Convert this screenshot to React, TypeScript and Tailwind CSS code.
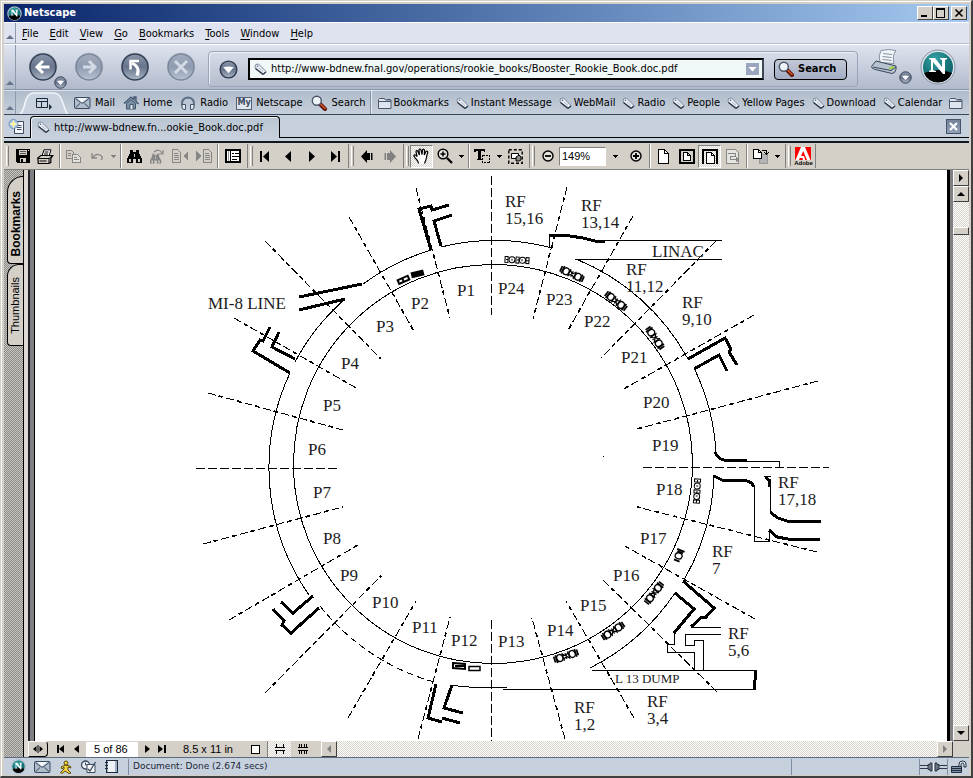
import type { ReactNode } from "react";

const UI = "font-['DejaVu_Sans_Condensed','DejaVu_Sans',sans-serif]";
const ARIAL = "font-['Liberation_Sans',Arial,sans-serif]";
const RAISED = "bg-[#d4d0c8] border border-t-white border-l-white border-r-[#404040] border-b-[#404040]";
const DITHER_DARK = "bg-[repeating-conic-gradient(#8c8c8a_0_25%,#c8c5be_0_50%)] bg-[length:2px_2px]";
const DITHER_LIGHT = "bg-[repeating-conic-gradient(#ffffff_0_25%,#d8d4cc_0_50%)] bg-[length:2px_2px]";

function Svg({ w, h, crisp, children }: { w: number; h: number; crisp?: boolean; children: ReactNode }) {
  return (
    <svg
      width={w}
      height={h}
      viewBox={`0 0 ${w} ${h}`}
      fill="none"
      stroke="#000"
      className="shrink-0"
      shapeRendering={crisp ? "crispEdges" : "auto"}
      aria-hidden="true"
    >
      {children}
    </svg>
  );
}

/* ---------- browser icons ---------- */

const TagIcon = () => (
  <Svg w={13} h={13}>
    <path d="M1 3.500 1.800 1.500 4.500 1 12 8.500 9.500 11 1.500 5.500z" fill="#e9eef4" stroke="#7a879b" />
    <path d="M1.500 5.500 9 11.500M9 11.500 12 9" stroke="#2b3648" strokeWidth="1.300" />
    <circle cx="3.500" cy="3.200" r=".8" fill="#53617a" stroke="none" />
    <path d="m5 5 4 3.500" stroke="#b0bac9" />
  </Svg>
);

const FolderIcon = () => (
  <Svg w={14} h={12}>
    <path d="M.5 11.500v-9l1-1h5l1 1.500h5.500v8.500z" fill="#dfe5ee" stroke="#4a566c" />
    <path d="M1 4.500h12M9 2.500h3.500" stroke="#4a566c" />
  </Svg>
);

const Magnifier = () => (
  <Svg w={17} h={16}>
    <path d="m9 9 5 5" stroke="#5c1408" strokeWidth="4" strokeLinecap="round" />
    <path d="m9.500 9 4.500 4.500" stroke="#d8562a" strokeWidth="1.600" strokeLinecap="round" />
    <circle cx="5.800" cy="5.800" r="4.500" fill="#eef3f8" stroke="#4b5666" strokeWidth="1.400" />
    <path d="M3.500 5a3 3 0 0 1 2-1.800" stroke="#fff" />
  </Svg>
);

const MailIcon = () => (
  <Svg w={17} h={12}>
    <rect x=".5" y=".5" width="15.500" height="11" rx="1" fill="#aebccb" stroke="#3c4a60" />
    <path d="m3 1 5.200 4.500L13.500 1z" fill="#f4f8fb" stroke="none" />
    <path d="m1.500 1.500 5 4q1.700 1.500 3.500 0l5-4M1.500 10.500l4.500-4M15 10.500l-4.500-4" stroke="#3c4a60" />
  </Svg>
);

const HomeIcon = () => (
  <Svg w={16} h={14}>
    <path d="M1 7.500 8 1l3 2.500V1h2v4.500l2.500 2.500" fill="#8fa3b6" stroke="#41566c" strokeWidth="1.300" />
    <path d="M3.500 7.500v5.500h9V7.500L8 3.500z" fill="#7b90a5" stroke="#41566c" />
    <path d="M7 13V8.500h3V13" fill="#e8eef4" stroke="#41566c" />
  </Svg>
);

const HeadphoneIcon = () => (
  <Svg w={16} h={15}>
    <path d="M2.500 10C1 4.500 4 1.500 8 1.500s7 3 5.500 8.500" stroke="#5b6e86" strokeWidth="2" />
    <path d="M2 8.500h3.500v5H4L2 12zM14 8.500h-3.500v5H12l2-1.500z" fill="#e4ebf2" stroke="#3f526a" />
  </Svg>
);

const NLogo = ({ size }: { size: number }) => (
  <svg width={size} height={size} viewBox="0 0 36 36" className="shrink-0" aria-hidden="true">
    <defs>
      <radialGradient id={`n${size}`} cx=".4" cy=".25" r=".8">
        <stop offset="0" stopColor="#35a3a5" />
        <stop offset="1" stopColor="#04565d" />
      </radialGradient>
    </defs>
    <circle cx="18" cy="18" r="17" fill="#dce3ea" stroke="#8490a2" />
    <circle cx="18" cy="18" r="15" fill={`url(#n${size})`} />
    <path d="M4 24Q18 18 32 24A15 15 0 0 1 4 24z" fill="#000" />
    <path d="M9 9h6l7 9v-7l-2-1V9h7v1l-2 1v14h-2L13 13v8l3 1v1H9v-1l2-1V11L9 10z" fill="#fff" />
  </svg>
);

const Gradients = () => (
  <svg width="0" height="0" className="absolute" aria-hidden="true">
    <defs>
      <linearGradient id="ball" x1="0" y1="0" x2="0" y2="1">
        <stop offset="0" stopColor="#8b97aa" />
        <stop offset=".5" stopColor="#66738a" />
        <stop offset="1" stopColor="#aab7c7" />
      </linearGradient>
      <linearGradient id="pale" x1="0" y1="0" x2="0" y2="1">
        <stop offset="0" stopColor="#a3acbd" />
        <stop offset=".5" stopColor="#8f9bb0" />
        <stop offset="1" stopColor="#b7c2d1" />
      </linearGradient>
    </defs>
  </svg>
);

function RoundButton({ label, pale, children }: { label: string; pale?: boolean; children: ReactNode }) {
  return (
    <button aria-label={label} className="flex h-[30px] w-[30px] shrink-0 items-center justify-center">
      <Svg w={30} h={30}>
        <circle cx="15" cy="15" r="14.500" fill="#c3cad8" stroke="none" />
        <circle cx="15" cy="15" r="13" fill={pale ? "url(#pale)" : "url(#ball)"} stroke={pale ? "#7c889c" : "#354257"} strokeWidth="1.600" />
        {children}
      </Svg>
    </button>
  );
}

function DropBall({ label, size }: { label: string; size: number }) {
  return (
    <button aria-label={label} className="block shrink-0">
      <svg width={size} height={size} viewBox="0 0 20 20" className="block" aria-hidden="true">
        <circle cx="10" cy="10" r="8.800" fill="url(#ball)" stroke="#2d394d" strokeWidth="1.400" />
        <path d="M4.500 7.500Q10 6 15.500 7.500L10 14z" fill="#fff" />
      </svg>
    </button>
  );
}

/* ---------- rows of the browser ---------- */

function Grippy() {
  return (
    <span className="flex w-3 shrink-0 items-end justify-center self-stretch border-r border-[#8d99ad] pb-1">
      <Svg w={8} h={4}>
        <path d="M0 4h8L4 0z" fill="#66738a" stroke="none" />
      </Svg>
    </span>
  );
}

function TitleBar() {
  const btn = `${RAISED} flex h-[14px] w-4 items-center justify-center`;
  return (
    <header className="flex h-[18px] shrink-0 items-center bg-linear-to-r from-[#0a246a] to-[#a6caf0] pr-0.5 pl-[3px]">
      <NLogo size={15} />
      <h1 className="ml-[2px] flex-1 pt-px text-[11px] font-bold text-white">Netscape</h1>
      <button aria-label="Minimize" className={btn}>
        <Svg w={10} h={10} crisp><path d="M1 8h6" strokeWidth="2" /></Svg>
      </button>
      <button aria-label="Maximize" className={btn}>
        <Svg w={10} h={10} crisp><path d="M.5 2v7.500h8V2" /><path d="M0 1h9" strokeWidth="2" /></Svg>
      </button>
      <button aria-label="Close" className={`${btn} ml-0.5`}>
        <Svg w={10} h={10}><path d="m1.500 1.500 7 7m0-7-7 7" strokeWidth="1.600" /></Svg>
      </button>
    </header>
  );
}

const MENUS = ["File", "Edit", "View", "Go", "Bookmarks", "Tools", "Window", "Help"];

function MenuBar() {
  return (
    <nav className="flex h-[22px] shrink-0 items-center border-t border-b border-t-white border-b-[#b3bccb] bg-[#dfe3ef]">
      <Grippy />
      <div className="flex gap-[11px] pt-0.5 pl-1.5">
        {MENUS.map((m) => (
          <button key={m}>
            <u className="underline-offset-2">{m[0]}</u>
            {m.slice(1)}
          </button>
        ))}
      </div>
    </nav>
  );
}

function NavBar() {
  return (
    <div className="flex h-[46px] shrink-0 items-center border-t border-b border-t-white border-b-[#8793a8] bg-linear-to-b from-[#dfe3ef] to-[#b1bacb]">
      <Grippy />
      <div className="flex items-center gap-4 pl-3">
        <span className="relative">
          <RoundButton label="Back">
            <path d="M21.500 15H9.500M15 9l-6 6 6 6" stroke="#fff" strokeWidth="3" />
          </RoundButton>
          <span className="absolute top-[24px] left-[26px]"><DropBall label="History" size={13} /></span>
        </span>
        <RoundButton label="Forward" pale>
          <path d="M9 15h11.500M15 9l6 6-6 6" stroke="#d3dae4" strokeWidth="3" />
        </RoundButton>
        <RoundButton label="Reload">
          <path d="M17 23.500Q20.500 15 12 11" stroke="#fff" strokeWidth="3" />
          <path d="M19 9H10.500V17.500" stroke="#fff" strokeWidth="2.500" />
        </RoundButton>
        <RoundButton label="Stop" pale>
          <path d="m9 9 12 12m0-12-12 12" stroke="#d3dae4" strokeWidth="3" />
        </RoundButton>
      </div>
      <div className="mb-0.5 ml-3 flex h-[36px] flex-1 items-center self-end rounded border border-[#98a4b9] px-2.5 shadow-[inset_1px_1px_0_#eef1f8]">
        <DropBall label="Sites" size={19} />
        <div className="ml-2.5 flex h-[22px] flex-1 items-center border-2 border-black border-r-[#3c4658] bg-[#f1f8f8] pr-[3px] pl-1">
          <TagIcon />
          <input
            aria-label="Address"
            className="ml-1 h-4 min-w-0 flex-1 bg-transparent outline-none"
            defaultValue="http://www-bdnew.fnal.gov/operations/rookie_books/Booster_Rookie_Book.doc.pdf"
          />
          <button aria-label="Show addresses" className="bg-[#9aa6bd]">
            <Svg w={13} h={12}><path d="M2.500 4h8l-4 4.500z" fill="#fff" stroke="none" /></Svg>
          </button>
        </div>
        <button className="ml-2.5 flex h-[21px] w-[73px] items-center gap-[3px] rounded border border-black bg-linear-to-b from-[#c2c9d8] to-[#a3adc3] pl-[3px] font-bold">
          <Magnifier />
          Search
        </button>
      </div>
      <div className="flex w-[111px] items-center pl-3">
        <span className="relative h-[38px] w-[50px]">
          <button aria-label="Print">
            <Svg w={32} h={28}>
              <path d="M11 2.500q8-2 15 0-4 5-2 13l-14-1q-2-7 1-12z" fill="#f2f5f8" stroke="#8591a2" />
              <path d="m13 5.500 9 1m-9.500 2 9 1m-9 2 9 1" stroke="#8591a2" />
              <path d="M6 13 1.500 18.500q0 2 3 2.800L22 25.500q3 0 4-4V18L10 14z" fill="#b9c3d0" stroke="#39475c" />
              <path d="M3 19 21 22.500l5-3.500" stroke="#39475c" />
              <path d="m19 20.500 5-1.500" stroke="#9ad23c" strokeWidth="2" />
            </Svg>
          </button>
          <span className="absolute top-[23px] left-[29px]"><DropBall label="Print options" size={13} /></span>
        </span>
        <NLogo size={36} />
      </div>
    </div>
  );
}

const LEFT_LINKS: [string, ReactNode][] = [
  ["Mail", <MailIcon key="i" />],
  ["Home", <HomeIcon key="i" />],
  ["Radio", <HeadphoneIcon key="i" />],
  ["Netscape", <span key="i" className="flex h-[13px] w-4 items-center justify-center border border-[#54637a] bg-[#dfe6ee] text-[9px] font-bold text-[#3c4a60]">My</span>],
  ["Search", <Magnifier key="i" />],
];
const RIGHT_LINKS = ["Instant Message", "WebMail", "Radio", "People", "Yellow Pages", "Download", "Calendar"];

function LinksBar() {
  return (
    <nav className="flex h-[25px] shrink-0 items-center overflow-hidden border-t border-b border-t-[#dbe2ec] border-b-[#39465a] bg-linear-to-b from-[#b1bccb] to-[#c6d0dc] whitespace-nowrap">
      <Grippy />
      <button aria-label="Sidebar" className="shrink-0">
        <Svg w={54} h={24}>
          <path d="M3 24Q7 22 9 12T18 2h20q6 0 9 10t5 12" fill="#c9d3df" stroke="#f3f6fa" strokeWidth="1.500" />
          <path d="M20.500 7.500h11v9h-11zM20.500 10.500h11M25.500 10.500v6" stroke="#1b2739" />
          <path d="M33 13v6l3-3z" fill="#1b2739" stroke="none" />
        </Svg>
      </button>
      <div className="flex items-center gap-2 pt-px pl-1">
        {LEFT_LINKS.map(([t, i]) => (
          <a key={t} href="#" className="flex items-center gap-1">{i}{t}</a>
        ))}
      </div>
      <span className="mx-1 w-0.5 self-stretch border-l border-[#8793a8] bg-[#e4e9f0]" />
      <div className="flex items-center gap-[7px] pt-px pl-0.5">
        <a href="#" className="flex items-center gap-0.5"><FolderIcon />Bookmarks</a>
        {RIGHT_LINKS.map((t) => (
          <a key={t} href="#" className="flex items-center gap-0.5"><TagIcon />{t}</a>
        ))}
        <a href="#" aria-label="More bookmarks"><FolderIcon /></a>
      </div>
    </nav>
  );
}

function TabBar() {
  return (
    <div className="shrink-0 border-b-2 border-[#101820] bg-[#c6d1dd]">
      <div className="flex h-[23px] items-end">
        <button aria-label="New tab" className="flex w-[26px] items-center justify-center self-stretch border-b border-black">
          <Svg w={18} h={17}>
            <path d="M6.500 3.500h9v12h-9z" fill="#f5f7fa" stroke="#3c4a60" />
            <path d="M9 7.500h4.500M9 9.500h4.500m-4.500 2h4.500" stroke="#3c4a60" />
            <circle cx="5.500" cy="6" r="4.500" fill="#a9c7ea" stroke="#6e8fb8" />
            <path d="m5.500 1.500 1.200 3.300L10 6 6.700 7.200 5.500 10.500 4.300 7.200 1 6l3.300-1.200z" fill="#fff6a0" stroke="none" />
          </Svg>
        </button>
        <button className="flex h-[22px] w-[250px] items-center rounded-t border border-b-0 border-black bg-linear-to-b from-[#b9c4d2] to-[#c8d2de] pl-1.5 shadow-[inset_1px_1px_0_#f0f4f8]">
          <TagIcon />
          <span className="pt-px pl-1">http://www-bdnew.fn...ookie_Book.doc.pdf</span>
        </button>
        <div className="flex flex-1 items-center justify-end self-stretch border-b border-black pr-2">
          <button aria-label="Close tab" className="border border-[#46536a] bg-linear-to-b from-[#74829a] to-[#93a1b5]">
            <Svg w={13} h={13}><path d="m3 3 7 7m0-7-7 7" stroke="#fff" strokeWidth="2" /></Svg>
          </button>
        </div>
      </div>
      <div className="h-[3px] bg-[#c6d1dd]" />
    </div>
  );
}

/* ---------- viewer toolbar ---------- */

function Tool({ label, on, children, className = "w-[23px]" }: { label: string; on?: boolean; children: ReactNode; className?: string }) {
  return (
    <button
      aria-label={label}
      className={`flex h-[23px] shrink-0 items-center justify-center ${className} ${on ? `border border-t-[#808080] border-l-[#808080] border-r-white border-b-white ${DITHER_LIGHT}` : ""}`}
    >
      {children}
    </button>
  );
}
const Sep = () => (
  <span className="flex w-[5px] shrink-0 justify-center self-stretch">
    <i className="w-0.5 border-l border-[#808080] bg-white" />
  </span>
);
const Split = () => (
  <span className="flex w-[9px] shrink-0 gap-[2px] self-stretch pl-0.5">
    <i className="w-px bg-[#808080]" />
    <i className="my-0.5 w-[3px] border-l border-r border-l-white border-r-[#808080]" />
  </span>
);
const Caret = ({ label, dim, className = "w-2.5" }: { label: string; dim?: boolean; className?: string }) => (
  <button aria-label={label} className={`flex shrink-0 justify-center ${className}`}>
    <Svg w={5} h={3} crisp><path d="M0 0h5L2.500 3z" fill={dim ? "#808080" : "#000"} stroke="none" /></Svg>
  </button>
);
const Nav = ({ d, color = "#000", w = 12 }: { d: string; color?: string; w?: number }) => (
  <Svg w={w} h={13}><path d={d} fill={color} stroke="none" /></Svg>
);
const FIRST = "M0 1h2v11H0zM9 1v11L3 6.500z";
const PREV = "M8 1v11L2 6.500z";
const NEXT = "M3 1v11l6-5.500z";
const LAST = "M2 1v11l6-5.500zM9 1h2v11H9z";

const Binoculars = ({ c = "#000" }: { c?: string }) => (
  <path
    d="M3 1h3v2h3V1h3v3l3 6v4H9v-4H6v4H0v-4l3-6zM2 10v3h2v-3zm9 0v3h2v-3zM7 5v3h1V5z"
    fill={c}
    stroke="none"
    fillRule="evenodd"
  />
);
const Sheet = () => (
  <>
    <path d="M1.500.5h6l4 4v10h-10z" fill="#fff" />
    <path d="M7.500.5v4h4" />
  </>
);

function ViewerToolbar() {
  return (
    <div className="flex h-[27px] shrink-0 items-center overflow-hidden border-b border-[#808080] bg-[#d4d0c8] py-px">
      <span className="flex w-[7px] shrink-0 justify-center self-stretch py-0.5"><i className="w-[3px] border-l border-r border-l-white border-r-[#808080]" /></span>
      <Tool label="Save a copy">
        <Svg w={14} h={14} crisp>
          <path d="M0 0h14v14H1l-1-1z" fill="#000" stroke="none" />
          <path d="M3 1h8v5H3zM4 9h6v4H4zM12 1h1v1h-1z" fill="#d4d0c8" stroke="none" />
          <path d="M4 2.500h6M4 4.500h6" stroke="#555" /><path d="M5 10h2v3H5z" fill="#000" stroke="none" />
        </Svg>
      </Tool>
      <Tool label="Print">
        <Svg w={17} h={15}>
          <path d="M5 7 7 .8h7L12 7" fill="#fff" /><path d="M7.500 3h4M7 5h4" />
          <path d="m.8 9 3-2.500h12l-2 3v4l-2.500 1h-10z" fill="#d4d0c8" strokeWidth="1.200" />
          <path d="M1 9.500h11l3-2.500M12 9.500v5M2.500 12h7" />
        </Svg>
      </Tool>
      <Sep />
      <Tool label="Copy">
        <Svg w={15} h={13} crisp>
          <path d="M.5.500h5l2 2v6h-7z" stroke="#868686" /><path d="M6.500 4.500h5l3 3v5h-8z" fill="#e4e1da" stroke="#868686" />
          <path d="M2 3.500h3m-3 2h3m3 2h3m-3 2h5" stroke="#868686" />
        </Svg>
      </Tool>
      <Tool label="Undo"><Svg w={12} h={9}><path d="M1 1v5h5M1.500 5.500Q5 1 9 3t1 5" stroke="#868686" strokeWidth="1.300" /></Svg></Tool>
      <Caret label="Undo list" dim />
      <Sep />
      <Tool label="Find"><Svg w={15} h={14} crisp><Binoculars /></Svg></Tool>
      <Tool label="Find again">
        <Svg w={15} h={15}>
          <g transform="translate(0 4) scale(.75)"><Binoculars c="#868686" /></g>
          <path d="M4 3q5-4 8 1M13 1v4H9" stroke="#868686" strokeWidth="1.200" />
        </Svg>
      </Tool>
      <Tool label="Previous result">
        <Svg w={17} h={14} crisp><path d="M.5.500h5l3 3v10h-8zM2 4.500h4m-4 2h5m-5 2h5m-5 2h5" stroke="#868686" /><path d="M16 2v10l-5-5z" fill="#868686" stroke="none" /></Svg>
      </Tool>
      <Tool label="Next result">
        <Svg w={17} h={14} crisp><path d="M8.500.500h5l3 3v10h-8zM10 4.500h4m-4 2h5m-5 2h5m-5 2h5" stroke="#868686" /><path d="M1 2v10l5-5z" fill="#868686" stroke="none" /></Svg>
      </Tool>
      <Sep />
      <Tool label="Navigation pane" className="w-[25px]">
        <Svg w={16} h={14} crisp>
          <path d="M1 1h14v12H1z" fill="#fff" strokeWidth="2" /><path d="M5 1v12M7 4.500h2m1 0h4M7 7.500h7M7 10.500h5" /><path d="M3 2v10" stroke="#999" />
        </Svg>
      </Tool>
      <Split />
      <Tool label="First page"><Nav d={FIRST} /></Tool>
      <Tool label="Previous page"><Nav d={PREV} /></Tool>
      <Tool label="Next page"><Nav d={NEXT} /></Tool>
      <Tool label="Last page"><Nav d={LAST} /></Tool>
      <Split />
      <Tool label="Previous view"><Nav d="M0 6.500 6 0v3h3v7H6v3zM10 3h1.500v7H10z" /></Tool>
      <Tool label="Next view"><Nav d="M12 6.500 6 0v3H3v7h3v3zM.5 3H2v7H.5z" color="#808080" /></Tool>
      <Split />
      <Tool label="Hand" on>
        <Svg w={17} h={16}>
          <path d="M5.500 15.500q0-2-2-4t-2.700-4Q2 6 4.200 8.500L3 4q0-2 1.500-1.200L6.500 7 6 2q1-2 2 0l1 4.500L9.500 2q1.200-1.700 2 .2L11.300 7l1.700-3.500q1.500-1 1.800.8-1 3-1.300 5.200t-2 6" fill="#fff" strokeWidth="1.200" />
        </Svg>
      </Tool>
      <Tool label="Zoom in tool">
        <Svg w={16} h={16}><circle cx="6" cy="6" r="4.800" fill="#e6e4df" strokeWidth="1.500" /><path d="M3.500 6h5M6 3.500v5" strokeWidth="1.500" /><path d="m10 10 5 5" strokeWidth="2.300" /></Svg>
      </Tool>
      <Caret label="Zoom tools" />
      <Sep />
      <Tool label="Select text">
        <Svg w={17} h={15} crisp><path d="M0 0h11v3h-1l-1-1H7v8h1v1H3v-1h1V2H2L1 3H0z" fill="#000" stroke="none" /><path d="M8.500 6.500h7v7h-7z" strokeDasharray="2 1" /></Svg>
      </Tool>
      <Caret label="Selection tools" />
      <Tool label="Snapshot">
        <Svg w={15} h={15}><path d="M.8.800h13.400v13.400H.8z" strokeWidth="1.400" strokeDasharray="3 2" /><path d="M3.500 4.500h7v5h-7z" fill="#fff" /><path d="m8 8 3-2 2 2v3l-2 1H8z" fill="#888" /></Svg>
      </Tool>
      <Split />
      <Tool label="Zoom out"><Svg w={12} h={12}><circle cx="6" cy="6" r="5" fill="#e6e4df" strokeWidth="1.400" /><path d="M3 6h6" strokeWidth="1.800" /></Svg></Tool>
      <input aria-label="Zoom level" defaultValue="149%" className={`h-[19px] w-[47px] border border-t-[#808080] border-l-[#808080] border-r-white border-b-white bg-white pl-0.5 text-[11px] ${ARIAL}`} />
      <Caret label="Zoom levels" className="w-[18px]" />
      <Tool label="Zoom in"><Svg w={12} h={12}><circle cx="6" cy="6" r="5" fill="#e6e4df" strokeWidth="1.400" /><path d="M3 6h6M6 3v6" strokeWidth="1.800" /></Svg></Tool>
      <Sep />
      <Tool label="Actual size"><Svg w={13} h={15} crisp><Sheet /></Svg></Tool>
      <Tool label="Fit page"><Svg w={16} h={15} crisp><path d="M1 1h14v13H1z" strokeWidth="2" fill="#d4d0c8" /><path d="M4.500 3.500h4l3 3v5h-7zM8.500 3.500v3h3" fill="#fff" /></Svg></Tool>
      <Tool label="Fit width" on><Svg w={16} h={15} crisp><path d="M0 1h16M1 0v15M15 0v15" strokeWidth="2" /><path d="M4.500 14.500v-11h5l3 3v8zM9.500 3.500v3h3" fill="#fff" /></Svg></Tool>
      <Tool label="Reflow"><Svg w={14} h={15} crisp><path d="M.5.500h9l3 3v11h-12z" fill="#e6e4df" stroke="#868686" /><path d="M2 4.500h7v3H4v3h8m-2-2 2 2-2 2" stroke="#868686" /></Svg></Tool>
      <Sep />
      <Tool label="Rotate"><Svg w={16} h={15} crisp><path d="M6.500 5.500h8v9h-8z" fill="#b4b4b4" stroke="#999" /><path d="M.5.500h5l3 3v6h-8z" fill="#fff" /><path d="M5.500.500v3h3M9 1.500h4.500V5m-2-1.500 2 2 2-2" /></Svg></Tool>
      <Caret label="Rotate options" className="w-[11px]" />
      <Split />
      <Tool label="Adobe">
        <span className="flex flex-col items-center">
          <Svg w={16} h={13}><path d="M0 0h16v13H0z" fill="#ff0000" stroke="none" /><path d="M6 0h4l5.500 13H12L8.200 4 6 9h3l1.200 4H8L7.500 11H4.800L4 13H.5z" fill="#fff" stroke="none" /></Svg>
          <span className={`text-[6px]/[6px] font-bold ${ARIAL}`}>Adobe</span>
        </span>
      </Tool>
      <i className="w-px self-stretch bg-[#808080]" />
    </div>
  );
}

/* ---------- the accelerator drawing ---------- */

const AXES = ["M491.500 176V315", "M643 467.500H829", "M491.500 620V741", "M196 468.500H338"];

const SPOKES = [
  "M567 187 533 319", "M633 216 567 332", "M716 241 601 358", "M754 315 622 390",
  "M818 381 637 429", "M817 552 637 507", "M755 619 623 545", "M717 692 601 578",
  "M634 718 566 601", "M565 739 532 618", "M418 739 450 617", "M348 718 416 601",
  "M265 693 381 576", "M229 620 358 545", "M203 544 343 507", "M208 393 343 430",
  "M234 318 358 389", "M265 241 381 359", "M349 217 415 333", "M416 188 450 318",
];

const LABELS: [string, number, number][] = [
  ["P1", 457, 296], ["P2", 411, 309], ["P3", 376, 332], ["P4", 341, 369], ["P5", 323, 411], ["P6", 308, 455],
  ["P7", 313, 498], ["P8", 323, 544], ["P9", 340, 581], ["P10", 372, 608], ["P11", 412, 633], ["P12", 451, 646],
  ["P13", 498, 647], ["P14", 547, 636], ["P15", 580, 611], ["P16", 613, 581], ["P17", 640, 544], ["P18", 656, 495],
  ["P19", 652, 451], ["P20", 643, 408], ["P21", 621, 363], ["P22", 584, 327], ["P23", 546, 305], ["P24", 498, 294],
  ["LINAC", 652, 257], ["MI-8 LINE", 208, 309],
];

const STATIONS: [string, number, number][] = [
  ["15,16", 505, 207], ["13,14", 581, 211], ["11,12", 626, 275], ["9,10", 682, 308], ["17,18", 778, 488],
  ["7", 712, 557], ["5,6", 728, 639], ["3,4", 647, 707], ["1,2", 574, 713],
];

const WALLS = [
  "M431 250 419 209 431 206 432 210 449 205", "M441 246 434 221 452 215",
  "M290 373 253 351 260 340 263 341 270 327", "M295 359 272 347 279 332",
  "M299 297 362 284", "M299 310 345 299",
  "M313 596 293 613 281 602", "M319 608 291 633 282 625 284 621 273 609",
  "M436 684 428 718 442 722M442 718 460 723", "M452 685 444 708 463 713",
  "M683 581 714 608 706 617 702 617 691 627", "M675 593 694 609 674 633",
  "M755 670V680L754 690", "M688 359 725 338 731 349 729 352 737 365", "M694 369 719 355 727 371",
  "M715 452Q718 459 724 460L747 461", "M714 476 722 480 747 481Q752 482 754 487",
  "M769 530 777 537 788 539 820 540", "M765 477 769 480V487", "M770 512 778 518 787 521H821",
  "M549 235 570 236 583 238 595 241H605",
];

const ARCS = [
  "M441 247A223 223 0 0 1 552 248", "M576 259A223 223 0 0 1 688 359", "M695 370A223 223 0 0 1 716 452",
  "M714 475A223 223 0 0 1 684 580", "M675 593A223 223 0 0 1 590 668", "M452 685Q466 688 507 688",
  "M309 595A223 223 0 0 1 290 373", "M295 362A223 223 0 0 1 345 299", "M363 284A223 223 0 0 1 431 250",
];

const LINES = [
  "M552 248V244M549.500 247V235M595 240.500H722", "M575 259.500H722",
  "M747 461H779V468", "M754.500 487V541H769V530", "M764 476H771M770.500 487V512",
  "M674 633V644H667V652H694V670", "M691 627H721M721 634H685V645H694V640H703V670",
  "M592 670.500H755M503 689H755",
];

const CAVITIES: [number, number, number][] = [
  [572, 274, 25], [616, 301, 38], [655, 338, 55], [654, 593, -52], [613, 631, -33], [566, 656, -18],
];

function Cavity({ at: [x, y, a] }: { at: [number, number, number] }) {
  return (
    <g transform={`translate(${x} ${y}) rotate(${a})`}>
      <path d="M-10-4v8M-12-3v6M10-4v8M12-3v6" strokeWidth="1.700" />
      <ellipse cx="-6.500" cy="0" rx="3" ry="3.500" fill="#fff" strokeWidth="1.300" />
      <ellipse cx="6.500" cy="0" rx="3" ry="3.500" fill="#fff" strokeWidth="1.300" />
      <path d="M-3-4v8M3-4v8M-3-3 3 3M3-3-3 3M0-3v6" strokeWidth="1.200" />
    </g>
  );
}

function SmallCavity({ at: [x, y, a] }: { at: [number, number, number] }) {
  return (
    <g transform={`translate(${x} ${y}) rotate(${a})`}>
      <path d="M-12-3h3v6h-3zM-1-3h3v6h-3zM9-3h3v6H9zM-11 0h2M9 0h3" />
      <ellipse cx="-5" cy="0" rx="3" ry="3" />
      <ellipse cx="5.500" cy="0" rx="3" ry="3" />
      <path d="M-5-1v2M5-1v2M0 0h2" />
    </g>
  );
}

function RingDiagram() {
  return (
    <svg
      viewBox="35 170 912 571"
      className="h-full w-full font-['Liberation_Serif','Times_New_Roman',serif] text-[17px]"
      fill="none"
      stroke="#000"
      role="img"
      aria-label="Booster ring periods and RF stations"
    >
      <g shapeRendering="crispEdges">
        <circle cx="493" cy="464" r="199.500" />
        {ARCS.map((d) => <path key={d} d={d} />)}
        {LINES.map((d) => <path key={d} d={d} />)}
        <path d="M434 682A223 223 0 0 1 320 606" strokeDasharray="7 4" />
        {AXES.map((d) => <path key={d} d={d} strokeDasharray="9 3" />)}
        {SPOKES.map((d) => (
          <g key={d}>
            <path d={d} strokeDasharray="8 3 5 3" />
            <path d={d} strokeDasharray="4 15" strokeDashoffset="-11" strokeWidth="1.700" />
          </g>
        ))}
        {WALLS.map((d) => <path key={d} d={d} strokeWidth="3" />)}
        <path d="M603 456h1" />
      </g>
      {CAVITIES.map((c) => <Cavity key={c[0]} at={c} />)}
      <SmallCavity at={[517, 260, 3]} />
      <SmallCavity at={[697, 491, 93]} />
      <g transform="translate(679 555) rotate(-68)"><ellipse cx="-1" rx="3" ry="3.500" strokeWidth="1.300" /><path d="M-6-3v6M5-4v8M3-3v6" strokeWidth="1.800" /></g>
      <g strokeWidth="2">
        <rect x="-5" y="-2" width="11" height="4" transform="translate(403 280) rotate(-24)" />
        <path d="M0-2v4" transform="translate(403 280) rotate(-24)" />
        <rect x="-5" y="-2" width="11" height="4" fill="#000" transform="translate(417 274) rotate(-14)" />
        <path d="M453 663l12 1v5l-12-1zM455 666h9" />
        <path d="M469 666.500h11v4h-11z" strokeWidth="1.500" />
      </g>
      <g fill="#1c1c1c" stroke="none">
        {LABELS.map(([t, x, y]) => <text key={t} x={x} y={y}>{t}</text>)}
        {STATIONS.map(([t, x, y]) => (
          <text key={t} x={x} y={y}>
            RF
            <tspan x={x} dy="17">{t}</tspan>
          </text>
        ))}
        <text x="615" y="683" className="text-[13px]">L 13 DUMP</text>
      </g>
    </svg>
  );
}

/* ---------- viewer body ---------- */

function SideTabs() {
  const tab = `flex w-4 items-center justify-center border border-r-0 border-black bg-[#d4d0c8] ${ARIAL}`;
  return (
    <aside className={`flex w-5 shrink-0 flex-col items-end border-r border-black pt-[6px] ${DITHER_DARK}`}>
      <button className={`${tab} h-[88px] rounded-tl-2xl rounded-bl pt-2 text-[12px] font-bold`}>
        <span className="rotate-180 [writing-mode:vertical-rl]">Bookmarks</span>
      </button>
      <button className={`${tab} h-[82px] rounded-tl-xl rounded-bl text-[11px]`}>
        <span className="rotate-180 [writing-mode:vertical-rl]">Thumbnails</span>
      </button>
    </aside>
  );
}

function VerticalScroll() {
  const b = `${RAISED} flex h-4 shrink-0 items-center justify-center`;
  return (
    <div className={`flex w-4 shrink-0 flex-col ${DITHER_LIGHT}`}>
      <button aria-label="Panel menu" className={b}><Svg w={8} h={8}><path d="M2 0v8l4-4z" fill="#000" stroke="none" /></Svg></button>
      <button aria-label="Scroll up" className={b}><Svg w={8} h={8}><path d="M0 6h8L4 2z" fill="#000" stroke="none" /></Svg></button>
      <div className="flex-1 pt-[25px]"><div className={`${RAISED} h-2`} /></div>
      <button aria-label="Scroll down" className={b}><Svg w={8} h={8}><path d="M0 2h8L4 6z" fill="#000" stroke="none" /></Svg></button>
    </div>
  );
}

function PageBar() {
  const small = "flex h-4 w-6 shrink-0 items-center justify-center";
  const arrow = `${RAISED} flex w-4 shrink-0 items-center justify-center self-stretch`;
  return (
    <div className={`flex h-4 shrink-0 items-center bg-[#d4d0c8] text-[11px] ${ARIAL}`}>
      <button aria-label="Toggle pane" className="flex h-4 w-5 shrink-0 items-center justify-center rounded-r border border-l-white border-t-white border-r-black border-b-black">
        <Svg w={10} h={8}><path d="M3.500 1v6L0 4zM6.500 1v6L10 4z" fill="#000" stroke="none" /><path d="M5 0v8" /></Svg>
      </button>
      <button aria-label="First page" className="ml-2 shrink-0"><Svg w={9} h={8}><path d="M1 0h2v8H1zM8 0v8L3 4z" fill="#000" stroke="none" /></Svg></button>
      <button aria-label="Previous page" className="ml-2 shrink-0"><Svg w={9} h={8}><path d="M6 0v8L1 4z" fill="#000" stroke="none" /></Svg></button>
      <input aria-label="Page" defaultValue="5 of 86" className="ml-1 h-[15px] w-[52px] bg-white pl-2" />
      <button aria-label="Next page" className="ml-1 shrink-0"><Svg w={9} h={8}><path d="M3 0v8l5-4z" fill="#000" stroke="none" /></Svg></button>
      <button aria-label="Last page" className="ml-[7px] shrink-0"><Svg w={9} h={8}><path d="M0 0v8l5-4zM6 0h2v8H6z" fill="#000" stroke="none" /></Svg></button>
      <span className="ml-4 w-[60px] shrink-0">8.5 x 11 in</span>
      <button aria-label="Single page" className={small}><Svg w={9} h={9} crisp><path d="M.5.500h8v8h-8z" fill="#fff" /></Svg></button>
      <button aria-label="Continuous" className={`${small} border-l border-[#808080] ${DITHER_LIGHT}`}><Svg w={10} h={10} crisp><path d="M1.500 0v3.500h7V0M1.500 10V6.500h7V10M0 3.500h10M0 6.500h10" /></Svg></button>
      <button aria-label="Facing" className={small}><Svg w={10} h={10} crisp><path d="M1.500 0v3.500h2V0M6.500 0v3.500h2V0M1.500 10V6.500h2V10M6.500 10V6.500h2V10M0 3.500h10M0 6.500h10" /></Svg></button>
      <div className={`ml-1.5 flex flex-1 justify-between self-stretch ${DITHER_LIGHT}`}>
        <button aria-label="Scroll left" className={arrow}><Svg w={8} h={8}><path d="M6 0v8L2 4z" fill="#808080" stroke="none" /></Svg></button>
        <button aria-label="Scroll right" className={arrow}><Svg w={8} h={8}><path d="M2 0v8l4-4z" fill="#808080" stroke="none" /></Svg></button>
      </div>
      <span className="w-4 shrink-0" />
    </div>
  );
}

function StatusBar() {
  return (
    <footer className="flex h-[18px] shrink-0 items-center border-t border-[#5c6b80] bg-[#c6d1dd]">
      <div className="flex items-center gap-2 pl-[7px]">
        <NLogo size={15} />
        <MailIcon />
        <Svg w={13} h={14}>
          <circle cx="7" cy="3" r="2" fill="#f6d743" stroke="#5b4a0c" />
          <path d="M2 7q4-3 9-1l1 2-3-1v3l3 3-2 .500L6 11l-3 2.500-1.500-1L5 9V7L3 9z" fill="#f6d743" stroke="#5b4a0c" />
        </Svg>
        <Svg w={17} h={13}>
          <circle cx="5.500" cy="5" r="4" fill="#eef2f6" stroke="#3c4a60" strokeWidth="1.300" /><path d="M5.500 2.500V5H7.500" stroke="#3c4a60" />
          <path d="M7 4.500h8v8H7z" fill="#f7f9fb" stroke="#3c4a60" /><path d="m8 9 2 2 5.500-9" stroke="#3c4a60" strokeWidth="1.300" />
        </Svg>
        <Svg w={13} h={13} crisp><path d="M1 .500h11.500v12H1z" fill="#9fb0c5" stroke="#1f2c40" /><path d="M3 1h7v11H3z" fill="#eef2f6" stroke="none" /><path d="M0 2.500h3m-3 3h3m-3 3h3" stroke="#1f2c40" /></Svg>
      </div>
      <p className="ml-2.5 flex h-4 flex-1 items-center border-l border-[#7f8da3] pt-px pl-1 font-['DejaVu_Sans',sans-serif] text-[9px] text-[#1b2636]">
        Document: Done (2.674 secs)
      </p>
      <span className="h-4 w-32 border-l border-[#7f8da3]" />
      <span className="flex h-4 w-7 items-center border-l border-[#7f8da3]">
        <Svg w={27} h={12}>
          <path d="M0 4.500h9m-9 3h9m9-3h9m-9 3h9" stroke="#2c3848" />
          <path d="M8 3.500h2V2h2v8h-2V8.500H8zM19 3.500h-2V2h-2v8h2V8.500h2z" fill="#6b7684" stroke="#2c3848" /><path d="M13.500 2v8" stroke="#fff" />
        </Svg>
      </span>
      <span className="flex h-4 w-[22px] items-center border-l border-[#7f8da3] pl-0.5">
        <Svg w={18} h={14}>
          <path d="M9 6V4q0-3 3.500-3T16 4v3h-2V4.500q0-1.500-1.500-1.500T11 4.500V6" fill="#eef2f6" stroke="#1f2c40" />
          <path d="M1.500 6.500h10v6h-10z" fill="#8195aa" stroke="#1f2c40" /><path d="M2 8.500h9m-9 2h9" stroke="#1f2c40" />
        </Svg>
      </span>
    </footer>
  );
}

export default function App() {
  return (
    <div className={`flex h-screen flex-col overflow-hidden border-t border-l border-r-2 border-b-2 border-t-[#d4d0c8] border-l-[#d4d0c8] border-r-[#404040] border-b-[#404040] bg-[#d4d0c8] pt-[3px] pr-0.5 pb-px pl-[3px] text-[11px] text-black shadow-[inset_1px_1px_0_#fff] ${UI}`}>
      <Gradients />
      <TitleBar />
      <MenuBar />
      <NavBar />
      <LinksBar />
      <TabBar />
      <ViewerToolbar />
      <main className="flex min-h-0 flex-1">
        <SideTabs />
        <div className="flex min-w-0 flex-1 flex-col border-l-4 border-[#dedad3]">
          <div className="flex min-h-0 flex-1">
            <span className="w-1.5 shrink-0 border-l-2 border-[#22222a] bg-[#808084]" />
            <section className="min-w-0 flex-1 border-r-3 border-l border-black bg-white">
              <RingDiagram />
            </section>
            <span className="w-[3px] shrink-0 bg-[#808084]" />
            <VerticalScroll />
          </div>
          <PageBar />
        </div>
      </main>
      <StatusBar />
    </div>
  );
}
